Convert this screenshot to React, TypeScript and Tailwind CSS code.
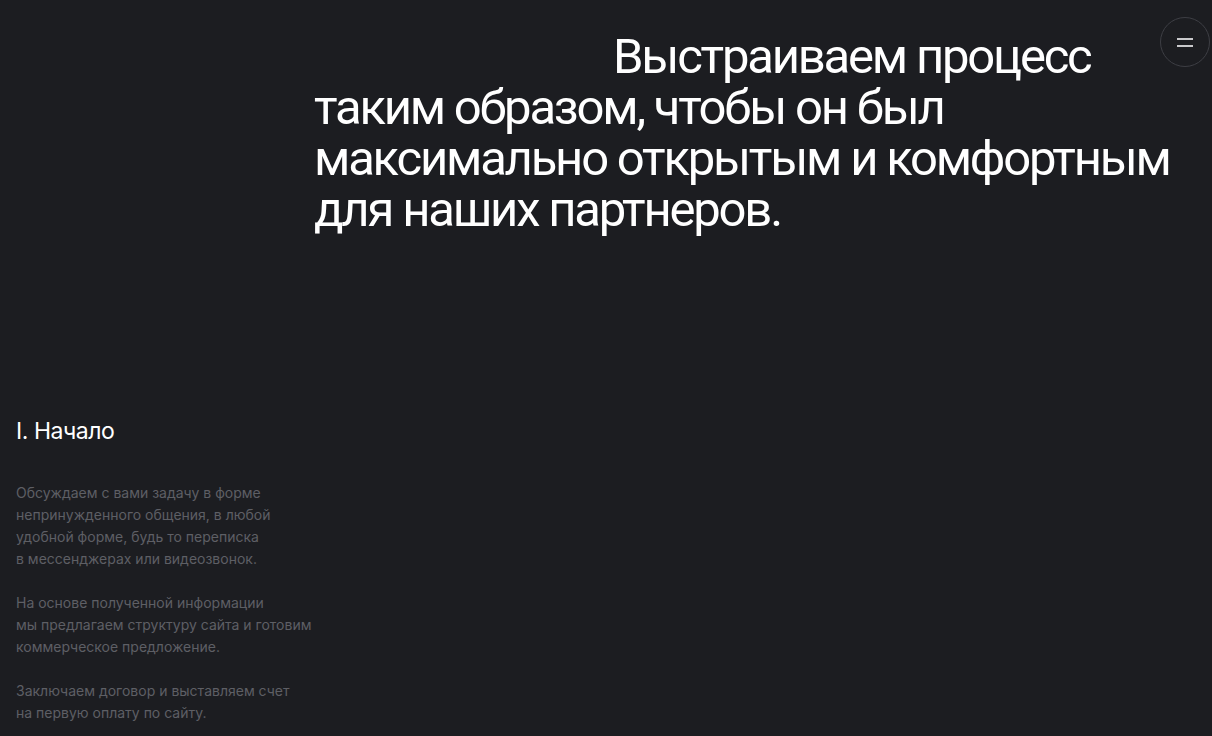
export default function App() {
  const steps = [
    [
      "Обсуждаем с вами задачу в форме",
      "непринужденного общения, в любой",
      "удобной форме, будь то переписка",
      "в мессенджерах или видеозвонок.",
    ],
    [
      "На основе полученной информации",
      "мы предлагаем структуру сайта и готовим",
      "коммерческое предложение.",
    ],
    ["Заключаем договор и выставляем счет", "на первую оплату по сайту."],
  ];

  return (
    <div
      className="relative min-h-[736px] w-full overflow-hidden bg-[#1c1d21] text-white"
      style={{ fontFamily: "Inter, 'Noto Sans', sans-serif" }}
    >
      {/* menu toggle */}
      <button className="absolute right-[2px] top-[17px] flex h-[50px] w-[50px] items-center justify-center rounded-full border border-[#3d3e44]">
        <span className="flex flex-col gap-[5px]">
          <span className="block h-[2px] w-[16px] bg-[#c9c9cc]" />
          <span className="block h-[2px] w-[16px] bg-[#c9c9cc]" />
        </span>
      </button>

      <section className="grid grid-cols-[314px_1fr] pt-[31px]">
        <div />
        <h1 className="whitespace-nowrap indent-[299px] font-['Roboto',sans-serif] text-[49px] font-normal leading-[51px] tracking-[-0.045em] text-white">
          Выстраиваем процесс
          <br />
          таким образом, чтобы он был
          <br />
          максимально открытым и комфортным
          <br />
          для наших партнеров.
        </h1>
      </section>

      <section className="mt-[181px] px-4">
        <h2 className="text-[23px] leading-[30px] tracking-[-0.02em] text-white">I. Начало</h2>
        <div className="mt-[36px] flex flex-col gap-[22px] text-[14px] leading-[22px] text-[#5e5f65]">
          {steps.map((p, i) => (
            <p key={i}>
              {p.map((line, j) => (
                <span key={j} className="block">
                  {line}
                </span>
              ))}
            </p>
          ))}
        </div>
      </section>
    </div>
  );
}
